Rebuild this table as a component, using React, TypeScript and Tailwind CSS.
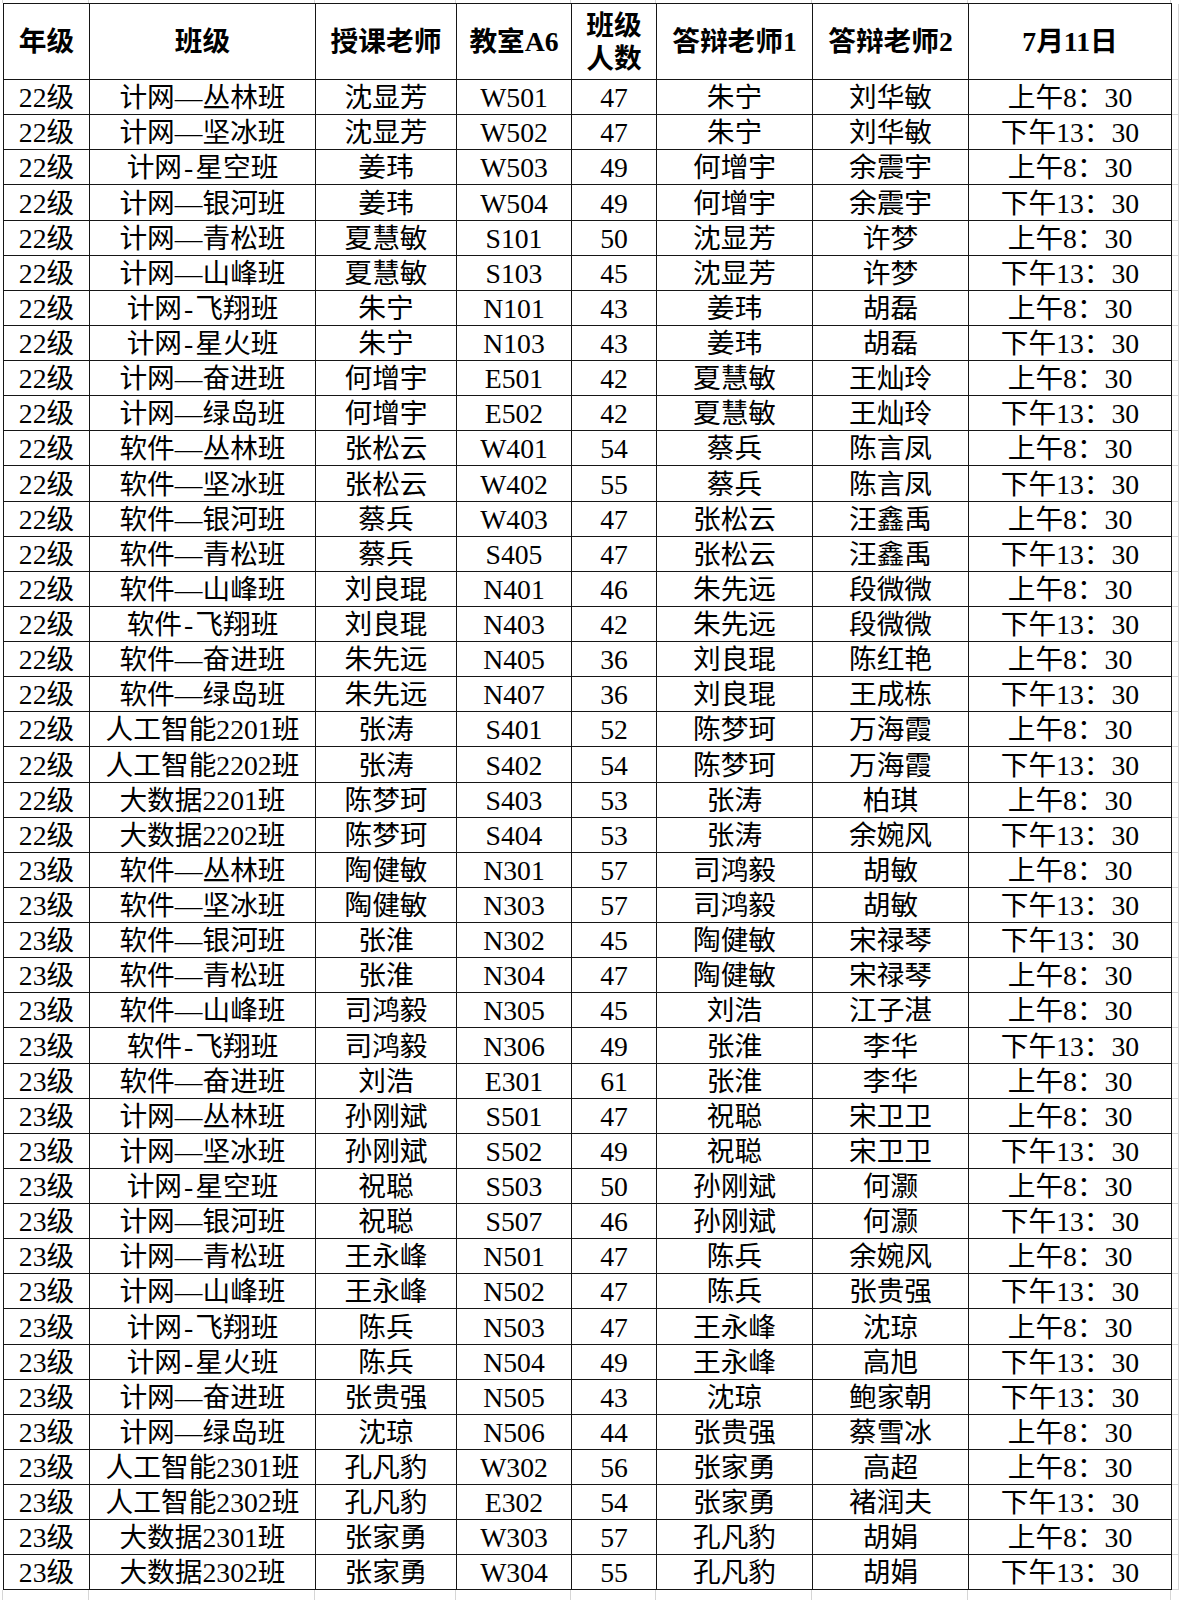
const cols = [86, 226, 141, 115, 85, 156, 156, 203]

const rows: string[][] = [
  ["22级", "计网—丛林班", "沈显芳", "W501", "47", "朱宁", "刘华敏", "上午8：30"],
  ["22级", "计网—坚冰班", "沈显芳", "W502", "47", "朱宁", "刘华敏", "下午13：30"],
  ["22级", "计网-星空班", "姜玮", "W503", "49", "何增宇", "余震宇", "上午8：30"],
  ["22级", "计网—银河班", "姜玮", "W504", "49", "何增宇", "余震宇", "下午13：30"],
  ["22级", "计网—青松班", "夏慧敏", "S101", "50", "沈显芳", "许梦", "上午8：30"],
  ["22级", "计网—山峰班", "夏慧敏", "S103", "45", "沈显芳", "许梦", "下午13：30"],
  ["22级", "计网-飞翔班", "朱宁", "N101", "43", "姜玮", "胡磊", "上午8：30"],
  ["22级", "计网-星火班", "朱宁", "N103", "43", "姜玮", "胡磊", "下午13：30"],
  ["22级", "计网—奋进班", "何增宇", "E501", "42", "夏慧敏", "王灿玲", "上午8：30"],
  ["22级", "计网—绿岛班", "何增宇", "E502", "42", "夏慧敏", "王灿玲", "下午13：30"],
  ["22级", "软件—丛林班", "张松云", "W401", "54", "蔡兵", "陈言凤", "上午8：30"],
  ["22级", "软件—坚冰班", "张松云", "W402", "55", "蔡兵", "陈言凤", "下午13：30"],
  ["22级", "软件—银河班", "蔡兵", "W403", "47", "张松云", "汪鑫禹", "上午8：30"],
  ["22级", "软件—青松班", "蔡兵", "S405", "47", "张松云", "汪鑫禹", "下午13：30"],
  ["22级", "软件—山峰班", "刘良琨", "N401", "46", "朱先远", "段微微", "上午8：30"],
  ["22级", "软件-飞翔班", "刘良琨", "N403", "42", "朱先远", "段微微", "下午13：30"],
  ["22级", "软件—奋进班", "朱先远", "N405", "36", "刘良琨", "陈红艳", "上午8：30"],
  ["22级", "软件—绿岛班", "朱先远", "N407", "36", "刘良琨", "王成栋", "下午13：30"],
  ["22级", "人工智能2201班", "张涛", "S401", "52", "陈梦珂", "万海霞", "上午8：30"],
  ["22级", "人工智能2202班", "张涛", "S402", "54", "陈梦珂", "万海霞", "下午13：30"],
  ["22级", "大数据2201班", "陈梦珂", "S403", "53", "张涛", "柏琪", "上午8：30"],
  ["22级", "大数据2202班", "陈梦珂", "S404", "53", "张涛", "余婉风", "下午13：30"],
  ["23级", "软件—丛林班", "陶健敏", "N301", "57", "司鸿毅", "胡敏", "上午8：30"],
  ["23级", "软件—坚冰班", "陶健敏", "N303", "57", "司鸿毅", "胡敏", "下午13：30"],
  ["23级", "软件—银河班", "张淮", "N302", "45", "陶健敏", "宋禄琴", "下午13：30"],
  ["23级", "软件—青松班", "张淮", "N304", "47", "陶健敏", "宋禄琴", "上午8：30"],
  ["23级", "软件—山峰班", "司鸿毅", "N305", "45", "刘浩", "江子湛", "上午8：30"],
  ["23级", "软件-飞翔班", "司鸿毅", "N306", "49", "张淮", "李华", "下午13：30"],
  ["23级", "软件—奋进班", "刘浩", "E301", "61", "张淮", "李华", "上午8：30"],
  ["23级", "计网—丛林班", "孙刚斌", "S501", "47", "祝聪", "宋卫卫", "上午8：30"],
  ["23级", "计网—坚冰班", "孙刚斌", "S502", "49", "祝聪", "宋卫卫", "下午13：30"],
  ["23级", "计网-星空班", "祝聪", "S503", "50", "孙刚斌", "何灏", "上午8：30"],
  ["23级", "计网—银河班", "祝聪", "S507", "46", "孙刚斌", "何灏", "下午13：30"],
  ["23级", "计网—青松班", "王永峰", "N501", "47", "陈兵", "余婉风", "上午8：30"],
  ["23级", "计网—山峰班", "王永峰", "N502", "47", "陈兵", "张贵强", "下午13：30"],
  ["23级", "计网-飞翔班", "陈兵", "N503", "47", "王永峰", "沈琼", "上午8：30"],
  ["23级", "计网-星火班", "陈兵", "N504", "49", "王永峰", "高旭", "下午13：30"],
  ["23级", "计网—奋进班", "张贵强", "N505", "43", "沈琼", "鲍家朝", "下午13：30"],
  ["23级", "计网—绿岛班", "沈琼", "N506", "44", "张贵强", "蔡雪冰", "上午8：30"],
  ["23级", "人工智能2301班", "孔凡豹", "W302", "56", "张家勇", "高超", "上午8：30"],
  ["23级", "人工智能2302班", "孔凡豹", "E302", "54", "张家勇", "褚润夫", "下午13：30"],
  ["23级", "大数据2301班", "张家勇", "W303", "57", "孔凡豹", "胡娟", "上午8：30"],
  ["23级", "大数据2302班", "张家勇", "W304", "55", "孔凡豹", "胡娟", "下午13：30"],
]

const headers = ["年级", "班级", "授课老师", "教室A6", "班级人数", "答辩老师1", "答辩老师2", "7月11日"]

// faint spreadsheet grid outside the table
function GridStrip({ h }: { h: string }) {
  return (
    <div className={`flex ${h}`}>
      <div className="w-[3px] border-r border-[#d6d6d6]" />
      {cols.map((w, i) => (
        <div key={i} className="border-r border-[#d6d6d6]" style={{ width: w }} />
      ))}
    </div>
  )
}

// the short hyphen in the source font is half-width, so pad it a little
function Cell({ text }: { text: string }) {
  if (!text.includes("-")) return <>{text}</>
  const [a, b] = text.split("-")
  return (
    <>
      {a}
      <span className="px-[2px]">-</span>
      {b}
    </>
  )
}

export default function App() {
  return (
    <div
      className="w-[1179px] h-[1600px] overflow-hidden bg-white text-black"
      style={{ fontFamily: '"Liberation Serif", "Noto Sans CJK SC", serif' }}
    >
      <div className="h-[3px] overflow-hidden">
        <GridStrip h="h-[3px]" />
      </div>
      <div className="pl-[3px]">
        <table className="border-collapse table-fixed text-[27.7px] leading-none">
          <colgroup>
            {cols.map((w, i) => (
              <col key={i} style={{ width: w }} />
            ))}
            <col className="w-[7px]" />
          </colgroup>
          <thead>
            <tr className="h-[76px]">
              {headers.map((h, i) => (
                <th
                  key={h}
                  className="border-[1.5px] border-[#161616] p-0 text-center align-middle font-bold whitespace-nowrap"
                >
                  {i === 4 ? (
                    <div className="flex flex-col items-center leading-[33px]">
                      <span>班级</span>
                      <span>人数</span>
                    </div>
                  ) : (
                    h
                  )}
                </th>
              ))}
              <th className="p-0 border-r border-[#d6d6d6]" />
            </tr>
          </thead>
          <tbody>
            {rows.map((r, ri) => (
              <tr key={ri} className="h-[35.14px]">
                {r.map((c, ci) => (
                  <td
                    key={ci}
                    className="border-[1.5px] border-[#161616] p-0 pt-[2px] text-center align-middle whitespace-nowrap"
                  >
                    <Cell text={c} />
                  </td>
                ))}
                <td className="p-0 border-y border-r border-[#d6d6d6]" />
              </tr>
            ))}
          </tbody>
        </table>
      </div>
      <GridStrip h="h-[12px]" />
    </div>
  )
}
